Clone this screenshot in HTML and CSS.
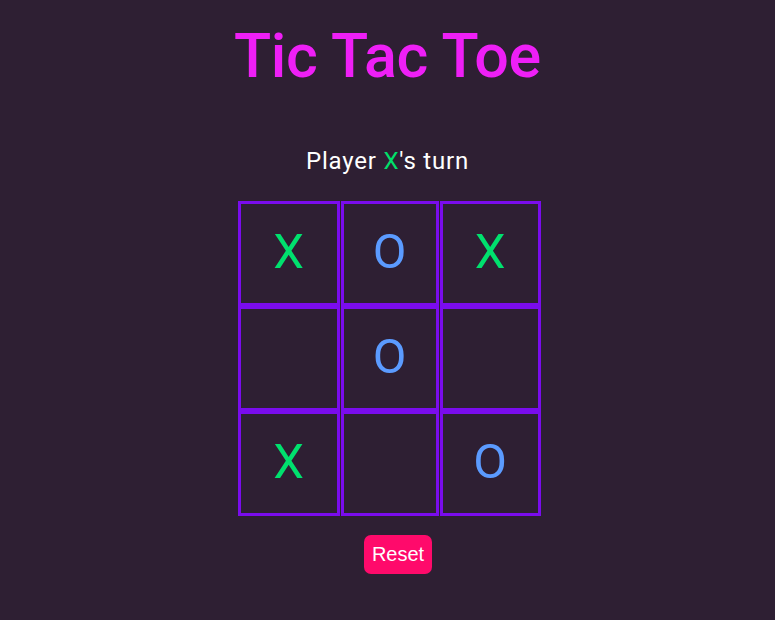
FILE: index.html
```html
<!DOCTYPE html>
<html>
<head>
<meta charset="utf-8">
<link rel="stylesheet" href="styles.css">
</head>
<body>
<div class="app">
  <h1 class="title">Tic Tac Toe</h1>
  <p class="status">Player <span class="x">X</span>'s turn</p>
  <div class="board">
    <div class="cell x">X</div>
    <div class="cell o">O</div>
    <div class="cell x">X</div>
    <div class="cell"></div>
    <div class="cell o">O</div>
    <div class="cell"></div>
    <div class="cell x">X</div>
    <div class="cell"></div>
    <div class="cell o">O</div>
  </div>
  <button class="reset">Reset</button>
</div>
</body>
</html>
```
FILE: styles.css
```css
html, body {
  margin: 0;
  padding: 0;
  background: #2e1f33;
  height: 100%;
}
.app {
  display: flex;
  flex-direction: column;
  align-items: center;
  font-family: "Roboto", "DejaVu Sans", sans-serif;
}
.title {
  margin: 21px 0 0 0;
  font-size: 61px;
  font-weight: 500;
  line-height: 70px;
  color: #ee1ff6;
  letter-spacing: -0.3px;
}
.status {
  margin: 55px 0 0 0;
  font-size: 24px;
  line-height: 30px;
  color: #ffffff;
  letter-spacing: 0.8px;
}
.status .x {
  color: #00e06a;
}
.board {
  margin-top: 25px;
  display: grid;
  grid-template-columns: 102px 98px 101px;
  grid-template-rows: 105px 105px 105px;
  column-gap: 1px;
  margin-left: 3px;
}
.cell {
  box-sizing: border-box;
  border: 3px solid #7a0ced;
  display: flex;
  align-items: center;
  justify-content: center;
  padding-bottom: 4px;
  font-size: 49px;
  font-weight: 400;
}
.cell.x { color: #00e06e; }
.cell.o { color: #5b9bff; }
.reset {
  margin-top: 19px;
  margin-left: 21px;
  width: 68px;
  height: 39px;
  border: none;
  border-radius: 7px;
  background: #ff0a6b;
  color: #ffffff;
  font-family: "Liberation Sans", Arial, sans-serif;
  font-size: 20px;
  padding: 0;
}
```
